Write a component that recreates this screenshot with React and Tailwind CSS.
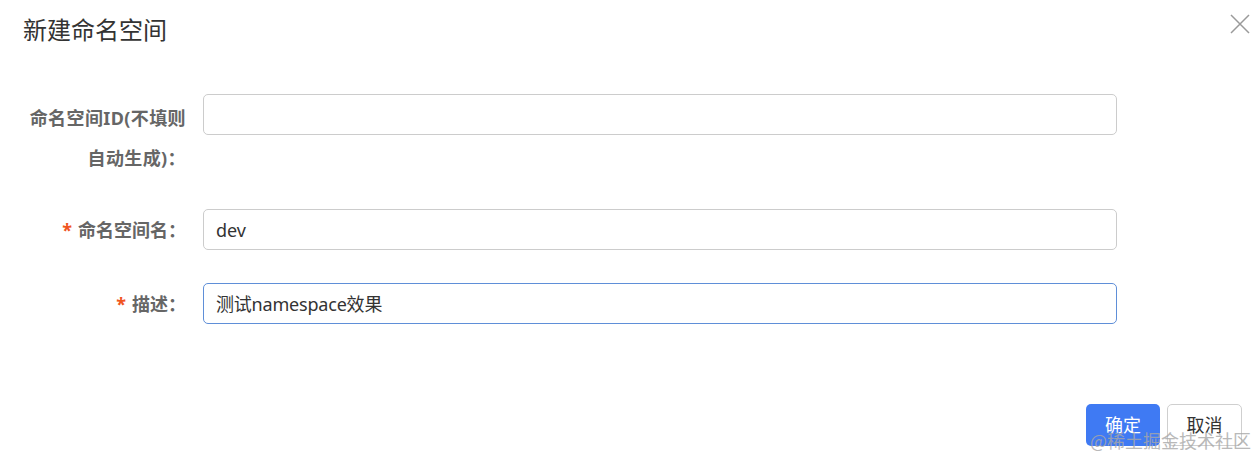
export default function App() {
  const font = { fontFamily: '"Noto Sans", "Noto Sans CJK SC", sans-serif' };
  return (
    <div className="relative w-full h-[456px] bg-white overflow-hidden" style={font}>
      <div className="flex items-start justify-between pl-[23px] pr-[6px] pt-[14px]">
        <h1 className="text-[24px] leading-[32px] text-[#333333] font-normal">新建命名空间</h1>
        <button className="w-[24px] h-[24px] flex items-center justify-center mt-[-2px]">
          <svg width="20" height="20" viewBox="0 0 20 20" fill="none">
            <path d="M1 1L19 19M19 1L1 19" stroke="#9a9a9a" strokeWidth="1.5" />
          </svg>
        </button>
      </div>

      <div className="mt-[48px] flex flex-col">
        <div className="flex items-start">
          <div className="w-[186px] text-right text-[18px] leading-[40px] font-bold text-[#666666] pt-[4px] tracking-[0.4px]">
            命名空间ID(不填则<br />自动生成)：
          </div>
          <div className="ml-[17px] w-[914px] h-[41px] border border-[#cccccc] rounded-[5px]"></div>
        </div>

        <div className="flex items-start mt-[31px]">
          <div className="w-[186px] h-[41px] text-right text-[18px] leading-[42px] font-bold text-[#666666]">
            <span className="text-[#f0541e] mr-[6px]">*</span>命名空间名：
          </div>
          <div className="ml-[17px] w-[914px] h-[41px] border border-[#cccccc] rounded-[5px] flex items-center pl-[12px] text-[18px] text-[#333333] pt-[1px]">
            dev
          </div>
        </div>

        <div className="flex items-start mt-[33px]">
          <div className="w-[186px] h-[41px] text-right text-[18px] leading-[42px] font-bold text-[#666666]">
            <span className="text-[#f0541e] mr-[6px]">*</span>描述：
          </div>
          <div className="ml-[17px] w-[914px] h-[41px] border border-[#5f8fd8] rounded-[5px] flex items-center pl-[12px] text-[18px] text-[#333333] pt-[1px] tracking-[-0.2px]">
            测试namespace效果
          </div>
        </div>
      </div>

      <div className="flex justify-end gap-[7px] pr-[16px] mt-[80px]">
        <button className="w-[74px] h-[42px] rounded-[5px] bg-[#3f7af3] text-white text-[18px]">确定</button>
        <button className="w-[75px] h-[42px] rounded-[5px] border border-[#cfcfcf] bg-white text-[#333333] text-[18px]">取消</button>
      </div>

      <div
        className="absolute right-[7px] bottom-[5px] text-[18px] leading-[22px] text-[#a8a8a8] opacity-80 pointer-events-none"
        style={{ fontFamily: '"Noto Sans CJK SC", sans-serif' }}
      >
        @稀土掘金技术社区
      </div>
    </div>
  );
}
